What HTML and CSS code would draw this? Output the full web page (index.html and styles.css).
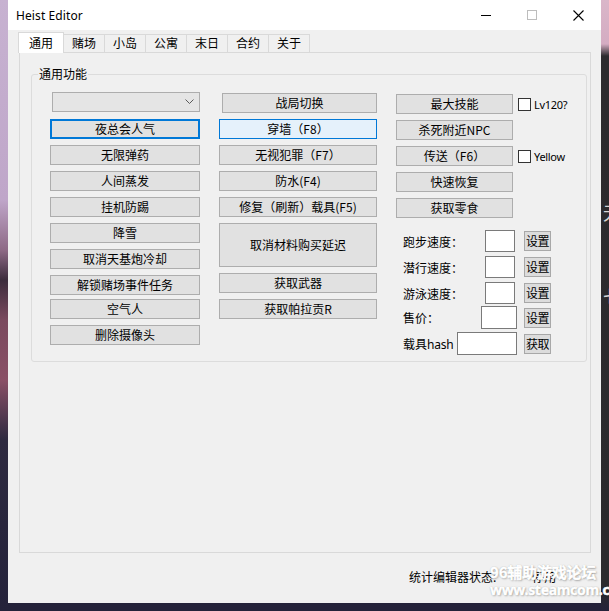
FILE: index.html
```html
<!DOCTYPE html>
<html lang="zh-CN">
<head>
<meta charset="utf-8">
<title>Heist Editor</title>
<link rel="stylesheet" href="styles.css">
</head>
<body>
<div class="window">
  <div class="titlebar">
    <span class="title">Heist Editor</span>
    <div class="caps">
      <span class="cap"><svg width="10" height="10" viewBox="0 0 10 10"><path d="M0 5.5H10" stroke="#000" stroke-width="1"/></svg></span>
      <span class="cap"><svg width="10" height="10" viewBox="0 0 10 10"><rect x="0.5" y="0.5" width="9" height="9" fill="none" stroke="#bdbdbd" stroke-width="1"/></svg></span>
      <span class="cap"><svg width="11" height="11" viewBox="0 0 11 11"><path d="M0.5 0.5L10.5 10.5M10.5 0.5L0.5 10.5" stroke="#000" stroke-width="1.1"/></svg></span>
    </div>
  </div>
  <div class="client">
    <div class="tabs">
      <span class="tab active">通用</span>
      <span class="tab">赌场</span>
      <span class="tab">小岛</span>
      <span class="tab">公寓</span>
      <span class="tab">末日</span>
      <span class="tab">合约</span>
      <span class="tab">关于</span>
    </div>
    <div class="tabpage">
      <fieldset class="group">
        <legend>通用功能</legend>
        <div class="cols">
          <div class="col col1">
            <div class="combo"><svg width="9" height="6" viewBox="0 0 9 6"><path d="M0.5 0.5L4.5 4.5L8.5 0.5" fill="none" stroke="#5a5a5a" stroke-width="1"/></svg></div>
            <button class="btn focused">夜总会人气</button>
            <button class="btn">无限弹药</button>
            <button class="btn">人间蒸发</button>
            <button class="btn">挂机防踢</button>
            <button class="btn">降雪</button>
            <button class="btn">取消天基炮冷却</button>
            <button class="btn">解锁赌场事件任务</button>
            <button class="btn tight">空气人</button>
            <button class="btn">删除摄像头</button>
          </div>
          <div class="col col2">
            <button class="btn first">战局切换</button>
            <button class="btn hover">穿墙（F8）</button>
            <button class="btn">无视犯罪（F7）</button>
            <button class="btn">防水(F4)</button>
            <button class="btn">修复（刷新）载具(F5)</button>
            <button class="btn tall">取消材料购买延迟</button>
            <button class="btn">获取武器</button>
            <button class="btn">获取帕拉贡R</button>
          </div>
          <div class="col col3">
            <div class="btnrow"><button class="btn">最大技能</button><label class="chk"><span class="box"></span><span class="chktext">Lv120?</span></label></div>
            <div class="btnrow"><button class="btn">杀死附近NPC</button></div>
            <div class="btnrow"><button class="btn">传送（F6）</button><label class="chk"><span class="box"></span><span class="chktext">Yellow</span></label></div>
            <div class="btnrow"><button class="btn">快速恢复</button></div>
            <div class="btnrow"><button class="btn">获取零食</button></div>
            <div class="form">
              <div class="frow"><span class="flabel">跑步速度：</span><span class="tb w30"></span><button class="sbtn">设置</button></div>
              <div class="frow"><span class="flabel">潜行速度：</span><span class="tb w30"></span><button class="sbtn">设置</button></div>
              <div class="frow"><span class="flabel">游泳速度：</span><span class="tb w30"></span><button class="sbtn">设置</button></div>
              <div class="frow r4"><span class="flabel">售价：</span><span class="tb w36"></span><button class="sbtn near">设置</button></div>
              <div class="frow r5"><span class="flabel">载具<span class="latin">hash</span></span><span class="tb w60"></span><button class="sbtn near">获取</button></div>
            </div>
          </div>
        </div>
      </fieldset>
    </div>
  </div>
  <div class="status"><span>统计编辑器状态:</span><span>停用</span></div>
</div>
<div class="watermark"><span class="wm1">96辅助游戏论坛</span><span class="wm2">www.steamcom.cn</span></div>
<span class="bgglyph g1">无</span>
<span class="bgglyph g2">七</span>
</body>
</html>
```

FILE: styles.css
```css
* { box-sizing: border-box; }
html, body { margin: 0; padding: 0; }
body {
  width: 609px;
  height: 611px;
  overflow: hidden;
  position: relative;
  font-family: "Noto Sans CJK SC", "Noto Sans", sans-serif;
  font-size: 12px;
  color: #000;
  background:
    linear-gradient(to bottom, #c7b2d1 0, #bfa6c9 200px, #8e6a86 250px, #3c2c3c 280px, #7a4a5e 320px, #8a5066 380px, #2e2a40 440px, #24223a 611px) left top / 8px 100% no-repeat,
    linear-gradient(to bottom, #dab6c9 0, #d4acc2 44px, #2d2b2e 56px, #2b2a2d 590px, #24223a 611px) right top / 8px 100% no-repeat,
    #24223a;
}
.window {
  margin-left: 8px;
  width: 593px;
  height: 603px;
  background: #f0f0f0;
  display: flex;
  flex-direction: column;
}
.titlebar {
  height: 30px;
  background: #fff;
  display: flex;
  align-items: center;
  flex-shrink: 0;
}
.title {
  margin-left: 8px;
  font-family: "Noto Sans", "Liberation Sans", sans-serif;
  font-size: 12px;
  letter-spacing: 0.1px;
  color: #000;
}
.caps { margin-left: auto; display: flex; }
.cap {
  width: 46px;
  height: 30px;
  display: flex;
  align-items: center;
  justify-content: center;
}
.client { padding: 2px 0 0 10px; }
.tabs {
  display: flex;
  align-items: flex-end;
  height: 21px;
  position: relative;
  z-index: 1;
}
.tab {
  height: 18px;
  margin-bottom: 1px;
  padding: 0 8px;
  border: 1px solid #d9d9d9;
  border-left: none;
  border-bottom: none;
  background: #f0f0f0;
  line-height: 16px;
  white-space: nowrap;
}
.tab.active {
  height: 21px;
  margin-bottom: 0;
  padding: 0 10px;
  border-left: 1px solid #d9d9d9;
  background: #fff;
  line-height: 19px;
}
.tabpage {
  margin-top: -1px;
  margin-left: 1px;
  width: 572px;
  height: 501px;
  border: 1px solid #d9d9d9;
  padding: 13px 0 0 11px;
}
.group {
  margin: 0;
  padding: 0;
  border: 1px solid #dcdcdc;
  border-radius: 3px;
  width: 556px;
  min-inline-size: 0;
}
.group legend {
  margin-left: 6px;
  padding: 0 1px;
  font-size: 12px;
  line-height: 16px;
}
.cols {
  display: flex;
  height: 279px;
  padding: 10px 0 0 18px;
}
.col { display: flex; flex-direction: column; gap: 6px; flex-shrink: 0; }
.col1 { width: 150px; }
.col2 { width: 158px; margin-left: 19px; padding-top: 1px; }
.col3 { width: 155px; margin-left: 19px; padding-top: 2px; }
.btn {
  height: 20px;
  margin: 0;
  padding: 0;
  border: 1px solid #adadad;
  background: #e1e1e1;
  color: #000;
  font-family: "Noto Sans CJK SC", "Noto Sans", sans-serif;
  font-size: 12px;
  line-height: 16px;
  display: flex;
  align-items: center;
  justify-content: center;
  white-space: nowrap;
  flex-shrink: 0;
}
.btn.focused { border: 2px solid #0078d7; }
.btn.hover { background: #e5f1fb; border-color: #0078d7; }
.btn.tight { margin-top: -2px; }
.btn.first { margin-left: 3px; }
.btn.tall { height: 44px; }
.combo {
  margin-left: 2px;
  margin-bottom: 1px;
  width: 148px;
  height: 20px;
  border: 1px solid #adadad;
  background: #e5e5e5;
  display: flex;
  align-items: center;
  justify-content: flex-end;
  padding-right: 5px;
}
.btnrow { display: flex; align-items: center; height: 20px; }
.btnrow .btn { width: 117px; }
.chk {
  margin-left: 5px;
  display: flex;
  align-items: center;
  gap: 3px;
  flex-shrink: 0;
  white-space: nowrap;
}
.box {
  width: 13px;
  height: 13px;
  border: 1px solid #333;
  background: #fff;
  flex-shrink: 0;
}
.chktext {
  font-family: "Noto Sans", "Liberation Sans", sans-serif;
  font-size: 11px;
  letter-spacing: -0.3px;
}
.form {
  margin-top: 6px;
  display: flex;
  flex-direction: column;
  gap: 4px;
}
.frow {
  width: 155px;
  height: 22px;
  padding-left: 7px;
  display: flex;
  align-items: center;
}
.frow.r4 { margin-top: -2px; height: 23px; }
.frow.r5 { margin-top: -1px; height: 23px; }
.flabel { white-space: nowrap; }
.latin { font-family: "Noto Sans", "Liberation Sans", sans-serif; font-size: 12px; letter-spacing: -0.2px; }
.tb {
  margin-left: auto;
  height: 100%;
  border: 1px solid #7a7a7a;
  background: #fff;
}
.w30 { width: 30px; }
.w36 { width: 36px; }
.w60 { width: 60px; }
.sbtn {
  margin: 0 0 0 9px;
  padding: 0;
  width: 27px;
  height: 20px;
  border: 1px solid #a8a8a8;
  background: #dcdcdc;
  color: #000;
  font-family: "Noto Sans CJK SC", sans-serif;
  font-size: 12px;
  line-height: 16px;
  display: flex;
  align-items: center;
  justify-content: center;
  white-space: nowrap;
  letter-spacing: -0.5px;
  flex-shrink: 0;
}
.sbtn.near { margin-left: 7px; }
.status {
  margin: 16px 0 0 401px;
  display: flex;
  gap: 36px;
  line-height: 16px;
}
.watermark {
  position: absolute;
  left: 490px;
  top: 562px;
  display: flex;
  flex-direction: column;
  color: #fff;
  font-weight: 700;
  -webkit-text-stroke: 0.6px #fff;
  text-shadow: 0 0 1px rgba(0, 0, 0, 0.55), 1px 1px 2px rgba(0, 0, 0, 0.3);
  white-space: nowrap;
}
.wm1 { font-size: 15px; line-height: 19px; letter-spacing: -0.2px; }
.wm2 { font-family: "Noto Sans", "Liberation Sans", sans-serif; font-size: 14px; line-height: 17px; letter-spacing: -0.3px; }
.bgglyph {
  position: absolute;
  left: 603px;
  color: #d8d8d8;
  font-size: 18px;
  line-height: 18px;
}
.g1 { top: 203px; }
.g2 { top: 287px; }
```
